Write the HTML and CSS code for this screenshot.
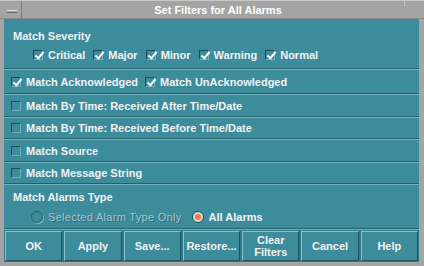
FILE: index.html
```html
<!DOCTYPE html>
<html lang="en">
<head>
    <meta charset="UTF-8">
    <title>Set Filters for All Alarms</title>
    <link rel="stylesheet" href="styles.css">
</head>
<body>
    <div class="window">
        <div class="titlebar">
            <div class="menu-btn"><span class="dash"></span></div>
            <div class="title">Set Filters for All Alarms</div>
            <div class="corner"></div>
        </div>
        <div class="content">
            <div class="section severity">
                <div class="label">Match Severity</div>
                <div class="options">
                    <span class="check on"></span><span class="opt">Critical</span>
                    <span class="check on"></span><span class="opt">Major</span>
                    <span class="check on"></span><span class="opt">Minor</span>
                    <span class="check on"></span><span class="opt">Warning</span>
                    <span class="check on"></span><span class="opt">Normal</span>
                </div>
            </div>
            <div class="section row ack">
                <span class="check on"></span><span class="opt">Match Acknowledged</span>
                <span class="check on"></span><span class="opt">Match UnAcknowledged</span>
            </div>
            <div class="section row r23">
                <span class="check"></span><span class="opt">Match By Time: Received After Time/Date</span>
            </div>
            <div class="section row r22">
                <span class="check"></span><span class="opt">Match By Time: Received Before Time/Date</span>
            </div>
            <div class="section row r23">
                <span class="check"></span><span class="opt">Match Source</span>
            </div>
            <div class="section row r22">
                <span class="check"></span><span class="opt">Match Message String</span>
            </div>
            <div class="section type">
                <div class="label">Match Alarms Type</div>
                <div class="options radios">
                    <span class="radio disabled"></span><span class="opt disabled">Selected Alarm Type Only</span>
                    <span class="radio on"></span><span class="opt">All Alarms</span>
                </div>
            </div>
            <div class="buttons">
                <button>OK</button>
                <button>Apply</button>
                <button>Save...</button>
                <button>Restore...</button>
                <button>Clear<br>Filters</button>
                <button>Cancel</button>
                <button>Help</button>
            </div>
        </div>
    </div>
</body>
</html>
```

FILE: styles.css
```css
* {
    margin: 0;
    padding: 0;
    box-sizing: border-box;
}

body {
    background: #a4a4a4;
    font-family: "Liberation Sans", Arial, sans-serif;
    font-size: 11px;
    font-weight: bold;
    color: #f2f2f2;
}

.window {
    width: 424px;
    height: 266px;
    background: #a4a4a4;
    padding: 0 5px 4px 4px;
    display: flex;
    flex-direction: column;
    border-top: 1px solid #c8c8c8;
}

.titlebar {
    height: 18px;
    margin: 0 -5px 0 -4px;
    display: flex;
    align-items: stretch;
    border-bottom: 1px solid #8a8a8a;
}

.menu-btn {
    width: 20px;
    border-right: 1px solid #7c7c7c;
    margin-left: 2px;
    display: flex;
    align-items: center;
    justify-content: center;
}

.menu-btn .dash {
    width: 10px;
    height: 3px;
    border-top: 1px solid #e0e0e0;
    border-bottom: 1px solid #6a6a6a;
    margin-top: 3px;
}

.title {
    flex: 1;
    text-align: center;
    line-height: 18px;
    color: #ffffff;
    padding-left: 10px;
}

.corner {
    width: 20px;
    border-left: 1px solid #c4c4c4;
    height: 5px;
}

.content {
    flex: 1;
    background: #3c8c9c;
    display: flex;
    flex-direction: column;
}

.section {
    border-top: 1px solid #74b4c0;
    border-bottom: 1px solid #23606c;
}

.severity {
    height: 50px;
    border-top: none;
    padding-top: 10px;
}

.label {
    line-height: 14px;
    padding-left: 9px;
}

.options {
    display: flex;
    align-items: center;
    height: 14px;
    margin-top: 5px;
    padding-left: 29px;
}

.row {
    display: flex;
    align-items: center;
    padding-left: 7px;
}

.ack { height: 25px; }
.r23 { height: 23px; }
.r22 { height: 22px; }

.check {
    width: 10px;
    height: 10px;
    border: 1px solid;
    border-color: #1d4e58 #6fb0bc #6fb0bc #1d4e58;
    position: relative;
    flex: none;
}

.check.on::after {
    content: "";
    position: absolute;
    left: 3px;
    top: -1px;
    width: 3px;
    height: 7px;
    border: solid #ffffff;
    border-width: 0 2px 2px 0;
    transform: rotate(40deg);
}

.opt {
    margin-left: 5px;
    margin-right: 8px;
}

.ack .opt {
    margin-right: 7px;
}

.type {
    height: 45px;
    padding-top: 5px;
}

.type .label {
    padding-left: 9px;
}

.radios {
    margin-top: 6px;
    padding-left: 27px;
}

.radio {
    width: 12px;
    height: 12px;
    border-radius: 50%;
    border: 1px solid #1d4e58;
    flex: none;
    position: relative;
}

.radio.disabled {
    border-color: #25606b;
    box-shadow: 1px 1px 0 #7fb8c3;
}

.radio.on {
    border-color: #1d4e58;
    background: #d9d9d9;
}

.radio.on::after {
    content: "";
    position: absolute;
    left: 2px;
    top: 2px;
    width: 6px;
    height: 6px;
    border-radius: 50%;
    background: #f07a3c;
}

.opt.disabled {
    color: #a9c6cd;
    font-weight: normal;
    letter-spacing: 0.3px;
    margin-right: 10px;
    text-shadow: 1px 1px 0 #2c6a76;
}

.buttons {
    height: 33px;
    display: flex;
    gap: 2px;
    padding: 1px;
    background: #2e7888;
    border-top: 1px solid #74b4c0;
}

.buttons button {
    flex: 1;
    background: #3c8c9c;
    border: 1px solid;
    border-color: #86c4cf #1d5461 #1d5461 #86c4cf;
    font-family: "Liberation Sans", Arial, sans-serif;
    font-size: 11px;
    font-weight: bold;
    color: #f2f2f2;
    line-height: 12px;
}
```
